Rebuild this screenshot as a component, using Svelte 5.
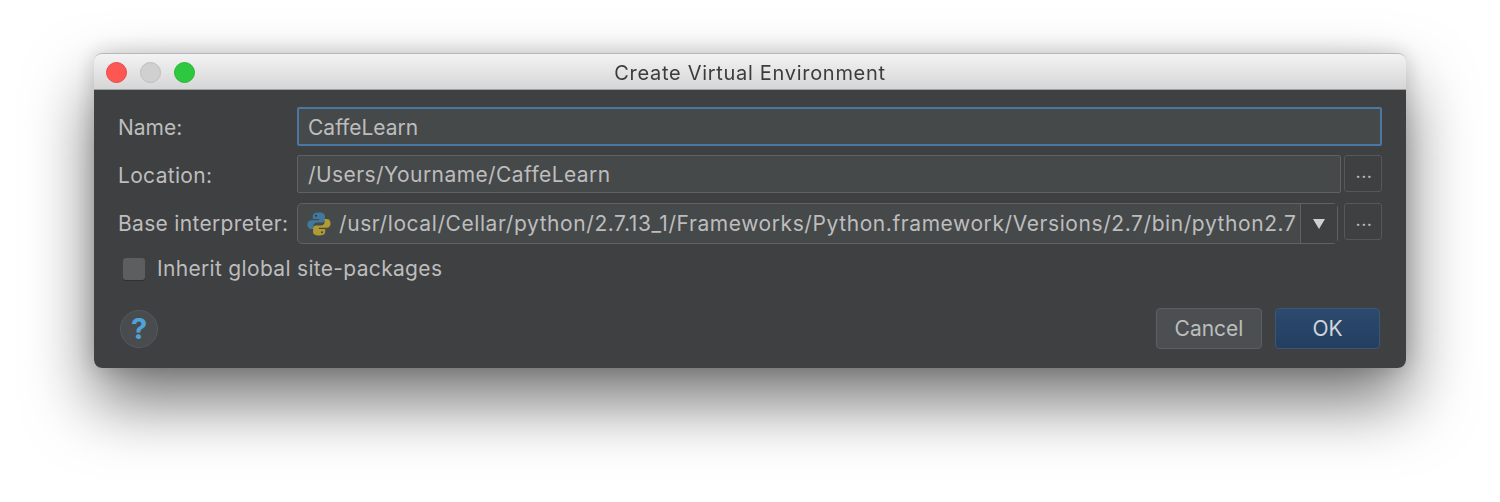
<script>
  const title = 'Create Virtual Environment';
</script>

<div class="stage">
  <section class="window">
    <header class="titlebar">
      <div class="lights">
        <span class="light red"></span>
        <span class="light grey"></span>
        <span class="light green"></span>
      </div>
      <h1>{title}</h1>
    </header>
    <div class="body">
      <div class="row name-row">
        <span class="label">Name:</span>
        <div class="field focus">CaffeLearn</div>
      </div>
      <div class="row loc-row">
        <span class="label spaced">Location:</span>
        <div class="field spaced wide">/Users/Yourname/CaffeLearn</div>
        <div class="browse"><span class="dots">···</span></div>
      </div>
      <div class="row int-row">
        <span class="label spaced">Base interpreter:</span>
        <div class="combo">
          <svg class="py" viewBox="0 0 24 24" width="24" height="24" aria-hidden="true">
            <path fill="#41799e" d="M11.8 0.5C6.600 0.5 5.800 2.600 5.800 4.400V7h6.400v1.200H4.200C2 8.200 0.400 10 0.400 12.400c0 2.600 1.400 4.600 3.600 4.600h2.400v-3.100c0-2 1.700-3.500 3.700-3.500h4.800c1.700 0 3-1.300 3-3V4.200C18 2.200 16.200 0.500 11.800 0.500z"/>
            <path fill="#b09a33" d="M12.200 23.500c5.200 0 6-2.100 6-3.900V17h-6.400v-1.200h8C22 15.800 23.600 14 23.600 11.600c0-2.600-1.400-4.600-3.600-4.600h-2.400v3.100c0 2-1.700 3.500-3.700 3.500H9.100c-1.700 0-3 1.300-3 3v4.200C6 21.800 7.800 23.500 12.200 23.500z"/>
            <circle cx="9" cy="3.800" r="1" fill="#2a3a44"/>
            <circle cx="15" cy="20.200" r="1" fill="#4a4020"/>
          </svg>
          <span class="path">/usr/local/Cellar/python/2.7.13_1/Frameworks/Python.framework/Versions/2.7/bin/python2.7</span>
          <span class="arrow"><i></i></span>
        </div>
        <div class="browse short"><span class="dots">···</span></div>
      </div>
      <label class="check">
        <span class="box"></span>
        <span class="spaced">Inherit global site-packages</span>
      </label>
      <footer class="foot">
        <div class="help">?</div>
        <div class="buttons">
          <button class="btn">Cancel</button>
          <button class="btn ok">OK</button>
        </div>
      </footer>
    </div>
  </section>
</div>

<style>
  :global(body) { margin: 0; background: #fff; }
  .stage { width: 1500px; height: 502px; box-sizing: border-box; padding: 53px 94px 0; overflow: hidden; }
  .window {
    height: 315px; border-radius: 8px; display: flex; flex-direction: column;
    box-shadow: 0 34px 66px rgba(0,0,0,.54), 0 0 22px rgba(0,0,0,.18);
    font-family: Inter, "Liberation Sans", Arial, sans-serif; font-size: 21px; color: #bdbdbd;
    filter: blur(.5px);
  }
  .spaced { letter-spacing: .32px; }
  .wide { letter-spacing: .42px; }
  .titlebar {
    height: 37px; flex: none; position: relative; box-sizing: border-box; border-radius: 8px 8px 0 0;
    background: linear-gradient(#f3f3f3, #d6d6d6); border-top: 1px solid #b8b8b8; border-bottom: 1px solid #a0a0a0;
    display: flex; align-items: center; justify-content: center;
  }
  .titlebar h1 { margin: 2px 0 0; font-size: 20px; font-weight: 400; color: #3c3c3c; letter-spacing: .7px; }
  .lights { position: absolute; left: 12px; top: 8px; display: flex; gap: 13px; }
  .light { width: 21px; height: 21px; border-radius: 50%; box-sizing: border-box; }
  .red { background: #fc5753; border: 1px solid #e9484a; }
  .grey { background: #d0d0d0; border: 1px solid #bdbdbd; }
  .green { background: #2ec840; border: 1px solid #25b634; }
  .body { flex: 1; background: #3e4042; border-radius: 0 0 8px 8px; padding: 17px 24px 19px 24px; display: flex; flex-direction: column; min-height: 0; }
  .row { display: flex; align-items: center; }
  .label { width: 179px; flex: none; }
  .name-row { height: 39px; }
  .name-row .label { padding-top: 2px; }
  .loc-row { height: 39px; margin-top: 8px; }
  .loc-row .label { padding-top: 3px; }
  .int-row { height: 41px; margin-top: 10px; align-items: flex-start; }
  .int-row .label { line-height: 41px; }
  .field {
    flex: 1; height: 38px; box-sizing: border-box; border: 1.5px solid #5f6163; border-radius: 2px;
    background: #45494a; padding-left: 10px; line-height: 37px; min-width: 0;
  }
  .focus { border: 2px solid #4a77a6; height: 39px; line-height: 37px; padding-left: 9px; }
  .browse {
    width: 38px; height: 37px; margin-left: 3px; box-sizing: border-box; border: 1.5px solid #55575a; border-radius: 3px;
    background: #3e4042; display: flex; align-items: center; justify-content: center; font-size: 18px; color: #bdbdbd; flex: none;
  }
  .dots { margin: 5px 0 0 2px; letter-spacing: .5px; }
  .short { margin-left: 6px; }
  .combo {
    flex: 1; height: 41px; box-sizing: border-box; border: 1.5px solid #5f6163; border-radius: 5px;
    background: #45494a; display: flex; align-items: center; min-width: 0; padding-left: 9px;
  }
  .py { flex: none; margin-right: 8px; }
  .path { flex: 1; white-space: nowrap; overflow: hidden; letter-spacing: .58px; }
  .arrow { width: 36px; height: 100%; border-left: 1.5px solid #5f6163; background: #3e4042; display: flex; align-items: center; justify-content: center; flex: none; }
  .arrow i { width: 0; height: 0; border-left: 6px solid transparent; border-right: 6px solid transparent; border-top: 10px solid #cfcfcf; }
  .check { display: flex; align-items: center; gap: 12px; margin-top: 12px; padding-left: 5px; height: 24px; }
  .box { width: 22px; height: 22px; margin-top: 2px; border-radius: 3px; background: #5c5e60; box-shadow: 0 1px 0 #2f3133; }
  .foot { display: flex; justify-content: space-between; align-items: center; margin-top: auto; padding: 0 2px; }
  .help {
    width: 38px; height: 38px; border-radius: 50%; background: #494c4f; border: 1px solid #56595b; box-sizing: border-box;
    text-align: center; font-weight: 700; font-size: 29px; line-height: 36px; color: #4fa3d8;
  }
  .buttons { display: flex; gap: 13px; }
  .btn {
    width: 106px; height: 41px; border-radius: 4px; border: 1.5px solid #5c6063; background: #4b4f51; color: #bdbdbd;
    font: inherit; padding: 0;
  }
  .ok { width: 105px; background: linear-gradient(#2c4a6f, #233e60); border-color: #3c5674; color: #d0d6dc; }
</style>
